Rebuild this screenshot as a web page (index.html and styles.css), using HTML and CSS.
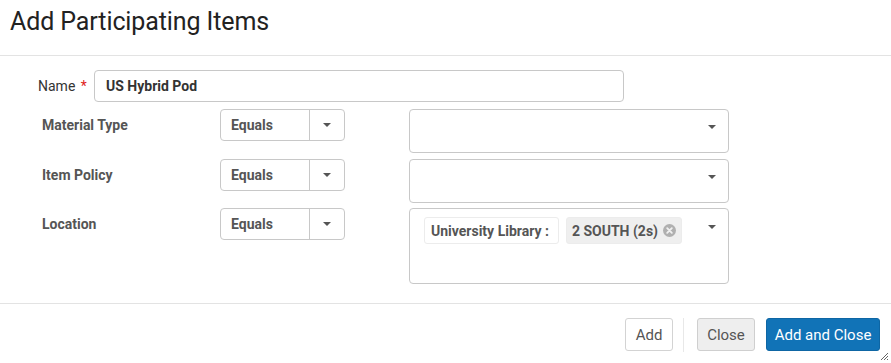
FILE: index.html
```html
<!DOCTYPE html>
<html lang="en">
<head>
<meta charset="utf-8">
<title>Add Participating Items</title>
<link rel="stylesheet" href="styles.css">
</head>
<body>
<div class="dialog">
  <header class="dlg-header">
    <h1 class="dlg-title">Add Participating Items</h1>
  </header>
  <main class="dlg-body">
    <div class="name-row">
      <label class="name-label">Name <span class="req">*</span></label>
      <div class="text-input">US Hybrid Pod</div>
    </div>
    <div class="cond-list">
      <div class="cond-row">
        <div class="cond-label">Material Type</div>
        <div class="op-select"><span class="op-value">Equals</span><span class="op-btn"><span class="caret"></span></span></div>
        <div class="val-select h44"><span class="caret val-caret"></span></div>
      </div>
      <div class="cond-row">
        <div class="cond-label">Item Policy</div>
        <div class="op-select"><span class="op-value">Equals</span><span class="op-btn"><span class="caret"></span></span></div>
        <div class="val-select h44"><span class="caret val-caret"></span></div>
      </div>
      <div class="cond-row row-loc">
        <div class="cond-label">Location</div>
        <div class="op-select"><span class="op-value">Equals</span><span class="op-btn"><span class="caret"></span></span></div>
        <div class="val-select h76">
          <div class="tags">
            <span class="tag tag-group">University Library :</span>
            <span class="tag tag-item">2 SOUTH (2s)<svg class="tag-x" width="13" height="13" viewBox="0 0 14 14"><circle cx="7" cy="7" r="7" fill="#b0b0b0"/><path d="M4.5 4.5 L9.5 9.5 M9.5 4.5 L4.5 9.5" stroke="#f0f0f0" stroke-width="2" stroke-linecap="round"/></svg></span>
          </div>
          <span class="caret val-caret"></span>
        </div>
      </div>
    </div>
  </main>
  <footer class="dlg-footer">
    <button class="btn btn-plain">Add</button>
    <span class="btn-sep"></span>
    <button class="btn btn-grey">Close</button>
    <button class="btn btn-primary">Add and Close</button>
  </footer>
  <svg class="grip" width="9" height="9" viewBox="0 0 9 9"><path d="M8 1 L1 8 M8 4 L4 8 M8 7 L7 8" stroke="#666" stroke-width="1"/></svg>
</div>
</body>
</html>
```

FILE: styles.css
```css
* { box-sizing: border-box; }
html, body { margin: 0; padding: 0; background: #fff; }
body {
  font-family: Roboto, "Liberation Sans", Arial, sans-serif;
  font-size: 14px;
  color: #333;
  width: 891px;
  height: 363px;
  overflow: hidden;
}
.dialog { position: relative; width: 891px; height: 363px; }

.dlg-header {
  height: 56px;
  padding: 7px 10px 0;
  border-bottom: 1px solid #e3e3e3;
}
.dlg-title {
  margin: 0;
  font-size: 25px;
  line-height: 30px;
  font-weight: 400;
  color: #222;
  white-space: nowrap;
  letter-spacing: -0.1px;
}

.dlg-body { padding: 14px 0 0 0; height: 247px; }

.name-row { display: flex; align-items: center; height: 32px; }
.name-label {
  width: 94px;
  padding-left: 38px;
  color: #333;
  font-size: 14px;
  white-space: nowrap;
}
.req { color: #e02020; margin-left: 2px; }
.text-input {
  width: 530px;
  height: 32px;
  border: 1px solid #c8c8c8;
  border-radius: 4px;
  padding: 0 11px;
  line-height: 30px;
  font-weight: 700;
  color: #333;
}

.cond-list { display: flex; flex-direction: column; gap: 6px; margin-top: 7px; }
.cond-row { display: flex; align-items: flex-start; }
.row-loc { margin-top: -1px; }
.cond-label {
  width: 220px;
  padding-left: 42px;
  line-height: 32px;
  font-weight: 700;
  color: #555;
}
.op-select {
  display: flex;
  width: 125px;
  height: 32px;
  border: 1px solid #c8c8c8;
  border-radius: 4px;
}
.op-value {
  width: 89px;
  padding-left: 10px;
  line-height: 30px;
  font-weight: 700;
  color: #555;
  border-right: 1px solid #c8c8c8;
}
.op-btn { flex: 1; display: flex; align-items: center; justify-content: center; }
.caret {
  display: inline-block;
  width: 0; height: 0;
  border-left: 4px solid transparent;
  border-right: 4px solid transparent;
  border-top: 4px solid #555;
}
.val-select {
  position: relative;
  margin-left: 64px;
  width: 320px;
  border: 1px solid #c8c8c8;
  border-radius: 4px;
}
.h44 { height: 44px; }
.h76 { height: 76px; }
.val-caret { position: absolute; right: 12px; top: 15px; }
.h76 .val-caret { top: 16px; }

.tags { display: flex; gap: 7px; padding: 8px 0 0 14px; }
.tag {
  display: inline-flex;
  align-items: center;
  height: 27px;
  padding: 0 8px 0 6px;
  border-radius: 3px;
  font-weight: 700;
  color: #555;
  font-size: 14px;
  white-space: nowrap;
}
.tag-group { background: #fff; border: 1px solid #ececec; padding-right: 9px; }
.tag-item { background: #efefef; border: 1px solid #ececec; gap: 5px; padding-left: 5px; padding-right: 5px; }
.tag-x { display: block; }

.dlg-footer {
  display: flex;
  justify-content: flex-end;
  align-items: flex-start;
  height: 60px;
  border-top: 1px solid #e3e3e3;
  padding: 14px 11px 0 0;
}
.btn {
  height: 33px;
  font-family: Roboto, "Liberation Sans", Arial, sans-serif;
  font-size: 15px;
  border-radius: 3px;
  padding: 0;
  white-space: nowrap;
  cursor: pointer;
}
.btn-plain { background: #fff; border: 1px solid #d3d3d3; color: #555; width: 48px; }
.btn-sep { width: 1px; height: 34px; background: #e8e8e8; margin: 0 13px 0 10px; }
.btn-grey { background: #eeeeee; border: 1px solid #cfcfcf; color: #555; width: 58px; margin-right: 11px; }
.btn-primary { background: #1173b7; border: 1px solid #0e66a4; color: #fff; width: 114px; font-size: 15px; }

.grip { position: absolute; right: 2px; bottom: 2px; }
```
